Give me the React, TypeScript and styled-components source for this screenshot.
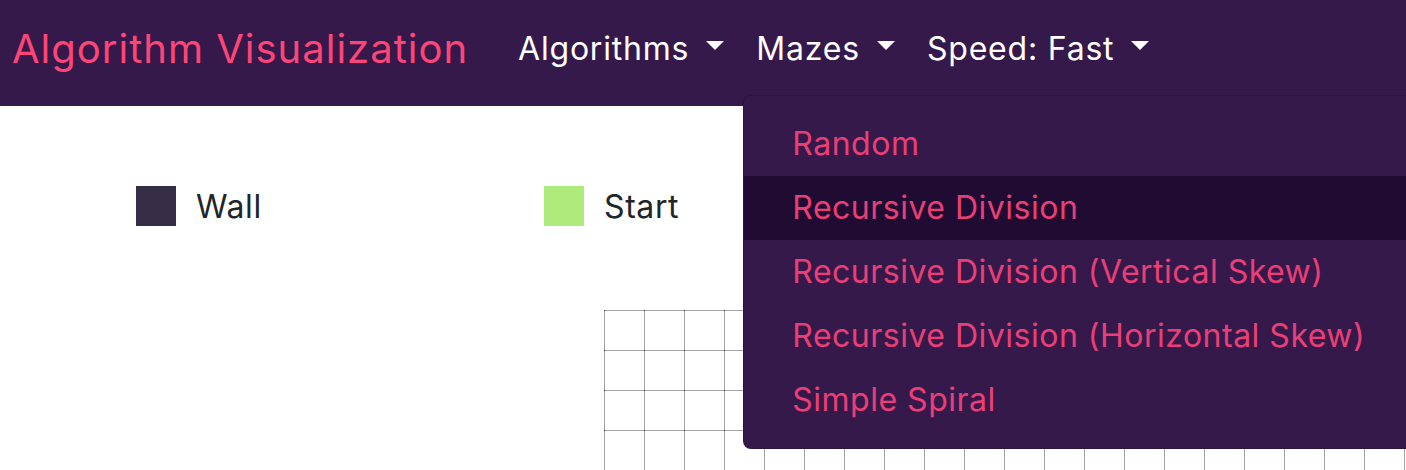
import React from "react";
import styled, { createGlobalStyle } from "styled-components";

const GlobalStyle = createGlobalStyle`
  html, body {
    margin: 0;
    padding: 0;
    overflow: hidden;
    background: #ffffff;
  }
  body {
    font-family: Inter, "Noto Sans", sans-serif;
    color: #212529;
  }
  * { box-sizing: border-box; }
`;

const Page = styled.div`
  width: 1406px;
  height: 470px;
  overflow: hidden;
  position: relative;
`;

const Navbar = styled.nav`
  height: 106px;
  background: #36194b;
  display: flex;
  align-items: stretch;
  padding-left: 12px;
  position: relative;
  z-index: 2;
`;

const Brand = styled.a`
  display: flex;
  align-items: center;
  padding-bottom: 10px;
  font-size: 40px;
  letter-spacing: 1px;
  color: #fd4577;
  margin-right: 34px;
  text-decoration: none;
  white-space: nowrap;
`;

const NavList = styled.ul`
  display: flex;
  list-style: none;
  margin: 0;
  padding: 0;
`;

const NavItem = styled.li`
  position: relative;
  display: flex;
`;

const NavLink = styled.a`
  display: flex;
  align-items: center;
  padding: 0 16px 10px;
  font-size: 32px;
  letter-spacing: 0.8px;
  color: #ffffff;
  text-decoration: none;
  white-space: nowrap;

  &::after {
    content: "";
    display: inline-block;
    margin-left: 17px;
    margin-top: -6px;
    border-top: 9px solid #ffffff;
    border-left: 9px solid transparent;
    border-right: 9px solid transparent;
  }
`;

const Menu = styled.div`
  position: absolute;
  top: 95px;
  left: 3px;
  background: #36194b;
  border: 1px solid rgba(0, 0, 0, 0.15);
  border-radius: 8px;
  padding: 16px 0;
  z-index: 5;
`;

const MenuItem = styled.a<{ $active?: boolean }>`
  display: block;
  padding: 8px 48px;
  font-size: 32px;
  line-height: 48px;
  letter-spacing: 0.5px;
  color: #ea3f76;
  white-space: nowrap;
  text-decoration: none;
  background: ${(p) => (p.$active ? "#200b33" : "transparent")};
`;

const Main = styled.main`
  padding-top: 80px;
`;

const Legend = styled.div`
  display: flex;
  padding-left: 136px;
`;

const LegendItem = styled.div`
  display: flex;
  align-items: center;
  width: 408px;
  flex: none;
`;

const Swatch = styled.span<{ $color: string }>`
  width: 40px;
  height: 40px;
  background: ${(p) => p.$color};
  margin-right: 20px;
  flex: none;
`;

const LegendLabel = styled.span`
  font-size: 32px;
  letter-spacing: 0.6px;
  color: #212529;
`;

const Board = styled.div`
  margin-top: 84px;
  margin-left: 604px;
  display: grid;
  grid-template-columns: repeat(21, 40px);
  grid-auto-rows: 40px;
`;

const Cell = styled.div`
  position: relative;
  border-left: 1px solid #a4a4a4;
  border-top: 1px solid #a4a4a4;

  &::before {
    content: "";
    position: absolute;
    left: -1px;
    top: -1px;
    width: 1px;
    height: 1px;
    background: #3a3a3a;
  }
`;

const mazes = [
  "Random",
  "Recursive Division",
  "Recursive Division (Vertical Skew)",
  "Recursive Division (Horizontal Skew)",
  "Simple Spiral",
];

const legend = [
  { label: "Wall", color: "#352d46" },
  { label: "Start", color: "#aeea7c" },
];

export default function App() {
  return (
    <Page>
      <GlobalStyle />
      <Navbar>
        <Brand href="#">Algorithm Visualization</Brand>
        <NavList>
          <NavItem>
            <NavLink href="#">Algorithms</NavLink>
          </NavItem>
          <NavItem>
            <NavLink href="#">Mazes</NavLink>
            <Menu>
              {mazes.map((m, i) => (
                <MenuItem key={m} href="#" $active={i === 1}>
                  {m}
                </MenuItem>
              ))}
            </Menu>
          </NavItem>
          <NavItem>
            <NavLink href="#">Speed: Fast</NavLink>
          </NavItem>
        </NavList>
      </Navbar>
      <Main>
        <Legend>
          {legend.map((l) => (
            <LegendItem key={l.label}>
              <Swatch $color={l.color} />
              <LegendLabel>{l.label}</LegendLabel>
            </LegendItem>
          ))}
        </Legend>
        <Board>
          {Array.from({ length: 21 * 4 }).map((_, i) => (
            <Cell key={i} />
          ))}
        </Board>
      </Main>
    </Page>
  );
}
